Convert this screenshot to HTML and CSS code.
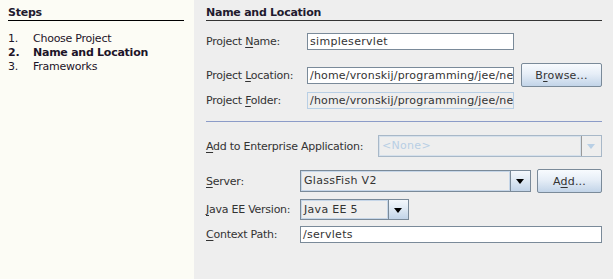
FILE: index.html
```html
<!DOCTYPE html>
<html lang="en">
<head>
    <meta charset="UTF-8">
    <title>New Web Application</title>
    <link rel="stylesheet" href="styles.css">
</head>
<body>
    <div class="wizard">
        <aside class="steps">
            <h2 class="title">Steps</h2>
            <ol class="step-list">
                <li><span class="num">1.</span>Choose Project</li>
                <li class="current"><span class="num">2.</span>Name and Location</li>
                <li><span class="num">3.</span>Frameworks</li>
            </ol>
        </aside>

        <main class="panel">
            <h2 class="title">Name and Location</h2>

            <div class="row row-name">
                <label class="label w-project">Project <u>N</u>ame:</label>
                <div class="field w-path">simpleservlet</div>
            </div>
            <div class="row row-location">
                <label class="label w-project">Project <u>L</u>ocation:</label>
                <div class="field path w-path">/home/vronskij/programming/jee/ne</div>
                <button class="button btn-browse">B<u>r</u>owse...</button>
            </div>
            <div class="row row-folder">
                <label class="label w-project">Project <u>F</u>older:</label>
                <div class="field path readonly w-path">/home/vronskij/programming/jee/ne</div>
            </div>

            <hr class="separator">

            <div class="row row-ear">
                <label class="label w-ear"><u>A</u>dd to Enterprise Application:</label>
                <div class="combo disabled grow">
                    <span class="combo-text">&lt;None&gt;</span>
                    <span class="combo-arrow"></span>
                </div>
            </div>
            <div class="row row-server">
                <label class="label w-server"><u>S</u>erver:</label>
                <div class="combo grow">
                    <span class="combo-text">GlassFish V2</span>
                    <span class="combo-arrow"></span>
                </div>
                <button class="button btn-add">A<u>d</u>d...</button>
            </div>
            <div class="row row-version">
                <label class="label w-server"><u>J</u>ava EE Version:</label>
                <div class="combo combo-version">
                    <span class="combo-text">Java EE 5</span>
                    <span class="combo-arrow"></span>
                </div>
            </div>
            <div class="row row-context">
                <label class="label w-server"><u>C</u>ontext Path:</label>
                <div class="field grow">/servlets</div>
            </div>
        </main>
    </div>
</body>
</html>
```

FILE: styles.css
```css
body {
    margin: 0;
    font-family: "DejaVu Sans", Verdana, sans-serif;
    font-size: 11px;
    letter-spacing: -0.25px;
    color: #333333;
    background-color: #eeeeee;
}

.wizard {
    display: flex;
    width: 613px;
    height: 279px;
    overflow: hidden;
}

u {
    text-decoration-thickness: 1px;
    text-underline-offset: 2px;
}

/* linke Spalte mit den Schritten */
.steps {
    width: 194px;
    flex-shrink: 0;
    box-sizing: border-box;
    padding: 6px 10px 0 8px;
    background-color: #fcfcf5;
    color: #1d1428;
}

.title {
    margin: 0;
    font-size: 11px;
    font-weight: bold;
    line-height: 14px;
    border-bottom: 1px solid #333333;
    color: #221a2e;
}

.steps .title {
    border-bottom-color: #000000;
}

.step-list {
    list-style: none;
    margin: 11px 0 0 0;
    padding: 0;
}

.step-list li {
    line-height: 14px;
    display: flex;
}

.step-list .num {
    width: 25px;
    flex-shrink: 0;
}

.step-list .current {
    font-weight: bold;
}

/* rechte Seite */
.panel {
    flex: 1;
    padding: 6px 11px 0 12px;
}

.row {
    display: flex;
    align-items: center;
}

.label {
    flex-shrink: 0;
    white-space: nowrap;
}

.w-project { width: 101px; }
.w-ear { width: 172px; }
.w-server { width: 94px; }
.w-path { width: 207px; }
.grow { flex: 1; }

.row-name { margin-top: 12px; height: 17px; }
.row-location { margin-top: 13px; height: 24px; }
.row-folder { margin-top: 5px; height: 17px; }
.row-ear { margin-top: 13px; height: 22px; }
.row-server { margin-top: 12px; height: 24px; }
.row-version { margin-top: 6px; height: 21px; }
.row-context { margin-top: 6px; height: 17px; }

.field {
    box-sizing: border-box;
    height: 17px;
    line-height: 15px;
    padding: 0 2px;
    letter-spacing: 0.3px;
    border: 1px solid #7a8a99;
    background-color: #ffffff;
    white-space: nowrap;
    overflow: hidden;
}

.field.path {
    letter-spacing: 0.18px;
}

.field.readonly {
    border-color: #b8cfe5;
    background-color: #eeeeee;
}

.separator {
    margin: 12px 0 0 0;
    border: none;
    border-top: 1px solid #8c9cc8;
    height: 0;
}

.button {
    box-sizing: border-box;
    height: 24px;
    margin-left: 7px;
    padding: 0;
    font-family: inherit;
    font-size: 11px;
    letter-spacing: 0.2px;
    color: #333333;
    border: 1px solid #7a8a99;
    border-radius: 2px;
    background: linear-gradient(#f8fbfe, #e6eef7 45%, #c2d4e8);
}

.btn-browse { width: 81px; }
.btn-add { width: 65px; margin-left: 6px; }

.combo {
    box-sizing: border-box;
    height: 22px;
    display: flex;
    border: 1px solid #7a8a99;
    background-color: #eeeeee;
}

.combo-version {
    width: 109px;
    height: 21px;
}

.combo-text {
    flex: 1;
    padding: 0 2px;
    line-height: 18px;
    letter-spacing: 0.3px;
    border: 1px solid #c6d6e8;
    white-space: nowrap;
    overflow: hidden;
}

.combo-arrow {
    width: 19px;
    flex-shrink: 0;
    border-left: 1px solid #7a8a99;
    background: linear-gradient(#f4f8fc, #dde8f3 50%, #c2d4e8);
    position: relative;
}

.combo-arrow::after {
    content: "";
    position: absolute;
    left: 5px;
    top: 50%;
    margin-top: -2px;
    border-left: 4px solid transparent;
    border-right: 4px solid transparent;
    border-top: 5px solid #000000;
}

.combo.disabled {
    border-color: #a8b8c8;
}

.combo.disabled .combo-text {
    color: #b8cfe5;
    border-color: #d6e1ec;
}

.combo.disabled .combo-arrow {
    border-left: 1px solid #999999;
    background: #eeeeee;
}

.combo.disabled .combo-arrow::after {
    border-top-color: #b8cfe5;
}
```
